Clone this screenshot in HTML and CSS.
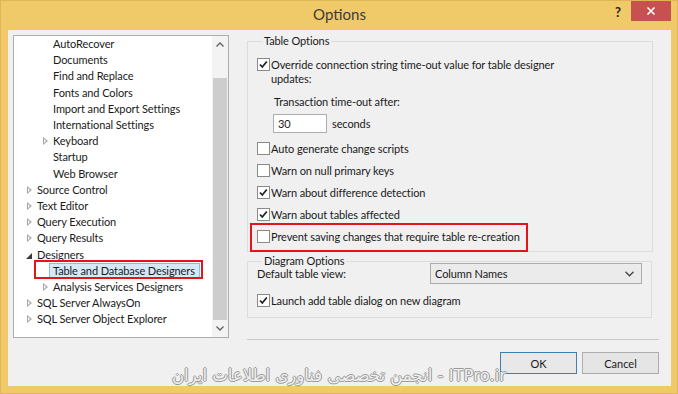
FILE: index.html
```html
<!DOCTYPE html>
<html lang="en">

<head>
    <meta charset="UTF-8">
    <meta name="viewport" content="width=device-width, initial-scale=1.0">
    <title>Options</title>
    <link rel="stylesheet" href="styles.css">
</head>

<body>
    <div class="window">
        <div class="titlebar">
            <div class="title">Options</div>
            <div class="help">?</div>
            <div class="close">
                <svg width="10" height="10" viewBox="0 0 10 10">
                    <path d="M1.5 1.5 L8.5 8.5 M8.5 1.5 L1.5 8.5" stroke="#fff" stroke-width="1.6" />
                </svg>
            </div>
        </div>

        <div class="client">
            <div class="main">
                <!-- navigation tree -->
                <div class="tree">
                    <ul class="tree-list">
                        <li class="item lvl2"><span class="tw"></span>AutoRecover</li>
                        <li class="item lvl2"><span class="tw"></span>Documents</li>
                        <li class="item lvl2"><span class="tw"></span>Find and Replace</li>
                        <li class="item lvl2"><span class="tw"></span>Fonts and Colors</li>
                        <li class="item lvl2"><span class="tw"></span>Import and Export Settings</li>
                        <li class="item lvl2"><span class="tw"></span>International Settings</li>
                        <li class="item lvl2"><span class="tw closed"></span>Keyboard</li>
                        <li class="item lvl2"><span class="tw"></span>Startup</li>
                        <li class="item lvl2"><span class="tw"></span>Web Browser</li>
                        <li class="item lvl1"><span class="tw closed"></span>Source Control</li>
                        <li class="item lvl1"><span class="tw closed"></span>Text Editor</li>
                        <li class="item lvl1"><span class="tw closed"></span>Query Execution</li>
                        <li class="item lvl1"><span class="tw closed"></span>Query Results</li>
                        <li class="item lvl1"><span class="tw open"></span>Designers</li>
                        <li class="item lvl2 marked"><span class="tw"></span><span class="selected">Table and Database Designers</span></li>
                        <li class="item lvl2"><span class="tw closed"></span>Analysis Services Designers</li>
                        <li class="item lvl1"><span class="tw closed"></span>SQL Server AlwaysOn</li>
                        <li class="item lvl1"><span class="tw closed"></span>SQL Server Object Explorer</li>
                    </ul>
                    <div class="scrollbar">
                        <div class="sb-btn">
                            <svg width="8" height="5" viewBox="0 0 8 5"><path d="M0.5 4.5 L4 1 L7.5 4.5" fill="none" stroke="#606060" stroke-width="1.3" /></svg>
                        </div>
                        <div class="sb-track"><div class="sb-thumb"></div></div>
                        <div class="sb-btn">
                            <svg width="8" height="5" viewBox="0 0 8 5"><path d="M0.5 0.5 L4 4 L7.5 0.5" fill="none" stroke="#606060" stroke-width="1.3" /></svg>
                        </div>
                    </div>
                </div>

                <!-- settings page -->
                <div class="page">
                    <fieldset class="group table-options">
                        <legend>Table Options</legend>
                        <div class="check-row">
                            <span class="cb checked"></span>
                            <span class="label">Override connection string time-out value for table designer<br>updates:</span>
                        </div>
                        <div class="sub-label">Transaction time-out after:</div>
                        <div class="timeout-row">
                            <div class="textbox">30</div>
                            <span>seconds</span>
                        </div>
                        <div class="check-list">
                            <div class="check-row"><span class="cb"></span><span class="label">Auto generate change scripts</span></div>
                            <div class="check-row"><span class="cb"></span><span class="label">Warn on null primary keys</span></div>
                            <div class="check-row"><span class="cb checked"></span><span class="label">Warn about difference detection</span></div>
                            <div class="check-row"><span class="cb checked"></span><span class="label">Warn about tables affected</span></div>
                            <div class="check-row marked"><span class="cb"></span><span class="label">Prevent saving changes that require table re-creation</span></div>
                        </div>
                    </fieldset>

                    <fieldset class="group diagram-options">
                        <legend>Diagram Options</legend>
                        <div class="view-row">
                            <span class="view-label">Default table view:</span>
                            <div class="combo">
                                <span>Column Names</span>
                                <svg width="9" height="6" viewBox="0 0 9 6"><path d="M0.5 0.8 L4.5 4.8 L8.5 0.8" fill="none" stroke="#444" stroke-width="1.3" /></svg>
                            </div>
                        </div>
                        <div class="check-row"><span class="cb checked"></span><span class="label">Launch add table dialog on new diagram</span></div>
                    </fieldset>

                    <div class="separator"></div>
                </div>
            </div>

            <div class="buttons">
                <button class="btn default">OK</button>
                <button class="btn">Cancel</button>
            </div>

            <div class="watermark" dir="rtl">ITPro.ir - انجمن تخصصی فناوری اطلاعات ایران</div>
        </div>
    </div>
</body>

</html>
```

FILE: styles.css
```css
body {
    margin: 0;
    width: 678px;
    height: 394px;
    overflow: hidden;
    font-family: 'Lato', 'Liberation Sans', sans-serif;
    font-size: 11px;
    letter-spacing: -0.1px;
    color: #1a1a1a;
}

.window {
    height: 394px;
    box-sizing: border-box;
    background-color: #f0c968;
    border: 1px solid #e0b557;
    display: flex;
    flex-direction: column;
}

/* title bar */
.titlebar {
    height: 29px;
    display: flex;
    align-items: flex-start;
}

.title {
    flex: 1;
    margin-left: 63px;
    text-align: center;
    font-size: 15px;
    letter-spacing: 0;
    line-height: 27px;
    color: #3c3c3c;
}

.help {
    width: 12px;
    margin-right: 4px;
    line-height: 22px;
    font-weight: bold;
    font-size: 13px;
    color: #222;
}

.close {
    width: 40px;
    height: 20px;
    margin-right: 6px;
    background-color: #c75050;
    display: flex;
    align-items: center;
    justify-content: center;
}

/* client area */
.client {
    flex: 1;
    margin: 0 6px 7px 7px;
    background-color: #f0f0f0;
    position: relative;
}

.main {
    display: flex;
    padding: 5px 0 0 5px;
}

/* tree */
.tree {
    width: 216px;
    height: 303px;
    box-sizing: border-box;
    border: 1px solid #abadb3;
    background-color: #fff;
    display: flex;
}

.tree-list {
    flex: 1;
    list-style: none;
    margin: 0;
    padding: 0;
}

.item {
    height: 16.2px;
    line-height: 16px;
    display: flex;
    align-items: center;
    white-space: nowrap;
}

.tw {
    width: 11px;
    height: 16px;
    flex-shrink: 0;
    position: relative;
}

.lvl1 .tw {
    margin-left: 12px;
}

.lvl2 .tw {
    margin-left: 28px;
}

.tw.closed::before {
    content: "";
    position: absolute;
    left: 1px;
    top: 4px;
    border-left: 5px solid #a6a6a6;
    border-top: 4px solid transparent;
    border-bottom: 4px solid transparent;
}

.tw.closed::after {
    content: "";
    position: absolute;
    left: 2px;
    top: 6px;
    border-left: 2.5px solid #fff;
    border-top: 2px solid transparent;
    border-bottom: 2px solid transparent;
}

.tw.open::before {
    content: "";
    position: absolute;
    left: 0;
    top: 6px;
    border-right: 6px solid #3a3a3a;
    border-top: 6px solid transparent;
}

.marked {
    position: relative;
}

.marked::after {
    content: "";
    position: absolute;
    left: 20px;
    top: -3px;
    width: 169px;
    height: 19px;
    box-sizing: border-box;
    border: 2px solid #e2141c;
}

.selected {
    margin-left: -4px;
    padding: 0 4px 0 3px;
    line-height: 14px;
    background-color: #d5e8f8;
    border: 1px solid #8cbce8;
}

.scrollbar {
    width: 16px;
    background-color: #f3f3f3;
    display: flex;
    flex-direction: column;
}

.sb-btn {
    height: 17px;
    display: flex;
    align-items: center;
    justify-content: center;
}

.sb-track {
    flex: 1;
    display: flex;
    flex-direction: column;
}

.sb-thumb {
    flex: 1;
    margin: 25px 1px 0 1px;
    background-color: #cdcdcd;
}

/* settings page */
.page {
    width: 412px;
    margin-left: 18px;
}

.group {
    margin: 0 6px 0 0;
    border: 1px solid #dcdcdc;
    padding: 11px 9px 7px 9px;
}

.group legend {
    padding: 0 2px;
    margin-left: 5px;
    line-height: 12px;
}

.check-row {
    display: flex;
    align-items: flex-start;
    line-height: 14px;
}

.cb {
    width: 13px;
    height: 13px;
    box-sizing: border-box;
    border: 1px solid #8a8a8a;
    background-color: #fff;
    margin-right: 1px;
    flex-shrink: 0;
}

.cb.checked {
    background-image: url("data:image/svg+xml,%3Csvg xmlns='http://www.w3.org/2000/svg' width='11' height='11' viewBox='0 0 11 11'%3E%3Cpath d='M2 5.5 L4.3 8 L8.8 2.5' fill='none' stroke='%23222' stroke-width='1.8'/%3E%3C/svg%3E");
    background-repeat: no-repeat;
}

.sub-label {
    margin: 9px 0 0 17px;
    line-height: 14px;
}

.timeout-row {
    display: flex;
    align-items: center;
    gap: 5px;
    margin: 5px 0 0 16px;
}

.textbox {
    width: 54px;
    height: 19px;
    box-sizing: border-box;
    border: 1px solid #abadb3;
    background-color: #fff;
    padding-left: 4px;
    line-height: 17px;
}

.check-list {
    display: flex;
    flex-direction: column;
    gap: 8px;
    margin-top: 9px;
}

.check-row.marked::after {
    content: "";
    position: absolute;
    left: -7px;
    top: -7px;
    width: 278px;
    height: 29px;
    box-sizing: border-box;
    border: 2px solid #e2141c;
}

.diagram-options {
    margin-top: 3px;
    padding-top: 1px;
    padding-bottom: 9px;
    margin-right: 7px;
}

.diagram-options legend {
    margin-bottom: -5px;
}

.view-row {
    display: flex;
    align-items: center;
}

.view-label {
    flex: 1;
}

.combo {
    width: 212px;
    height: 21px;
    box-sizing: border-box;
    border: 1px solid #acacac;
    background-color: #ebebeb;
    display: flex;
    align-items: center;
    justify-content: space-between;
    padding: 0 7px 0 4px;
}

.diagram-options .check-row {
    margin-top: 10px;
}

.separator {
    margin-top: 21px;
    border-top: 1px solid #c9c9c9;
}

/* dialog buttons */
.buttons {
    display: flex;
    justify-content: flex-end;
    gap: 5px;
    margin-top: 12px;
    padding-right: 12px;
}

.btn {
    width: 77px;
    height: 22px;
    border: 1px solid #acacac;
    background-color: #e5e5e5;
    font-family: 'Lato', 'Liberation Sans', sans-serif;
    font-size: 11px;
    color: #1a1a1a;
    padding: 0;
}

.btn.default {
    border-color: #3c7fb1;
    background-color: #e8e8e8;
}

.watermark {
    position: absolute;
    left: 164px;
    top: 336px;
    font-family: 'DejaVu Sans', sans-serif;
    font-size: 16.5px;
    letter-spacing: 0;
    color: #efefef;
    white-space: nowrap;
    text-shadow: 1px 0 0 #9a9a9a, -1px 0 0 #9a9a9a, 0 1px 0 #9a9a9a, 0 -1px 0 #9a9a9a;
}
```
